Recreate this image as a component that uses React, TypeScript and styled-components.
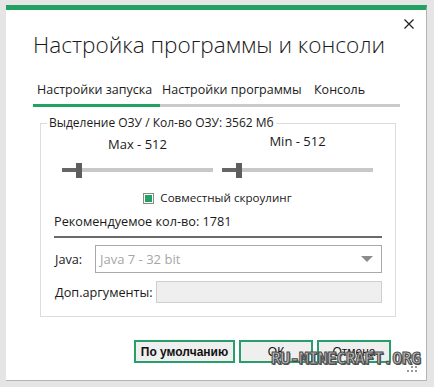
import React from "react";
import styled, { createGlobalStyle } from "styled-components";

const GREEN = "#22a163";

const Global = createGlobalStyle`
  html, body { margin: 0; padding: 0; background: #e5e5e5; }
  body { font-family: "Open Sans", "Noto Sans", sans-serif; color: #1a1a1a; }
`;

const Frame = styled.div`
  width: 434px;
  height: 387px;
  padding: 5px 6px 6px 6px;
  box-sizing: border-box;
  position: relative;
`;

const Window = styled.div`
  position: relative;
  width: 421px;
  height: 376px;
  box-sizing: border-box;
  background: #fff;
  border-top: 5px solid ${GREEN};
  border-right: 1px solid #b5b5b5;
  border-bottom: 1px solid #b5b5b5;
  display: flex;
  flex-direction: column;
`;

const Close = styled.svg`
  position: absolute;
  right: 12px;
  top: 9px;
  display: block;
`;

const Title = styled.h1`
  margin: 20px 0 0 27px;
  font-size: 22.6px;
  font-weight: 300;
  line-height: 30px;
  color: #1a1a1a;
  white-space: nowrap;
`;

const Tabs = styled.div`
  margin: 20px 0 0 27px;
  width: 367px;
  display: flex;
  border-bottom: 3px solid #cacaca;
`;

const Tab = styled.div<{ $active?: boolean; $w: number; $pl: number }>`
  width: ${(p) => p.$w}px;
  box-sizing: border-box;
  padding: 0 0 5px ${(p) => p.$pl}px;
  font-size: 12.5px;
  line-height: 19px;
  white-space: nowrap;
  position: relative;
  &::after {
    content: "";
    display: ${(p) => (p.$active ? "block" : "none")};
    position: absolute;
    left: 0;
    right: 0;
    bottom: -3px;
    height: 3px;
    background: ${GREEN};
  }
`;

const Group = styled.fieldset`
  margin: 8px 0 0 34px;
  width: 353px;
  height: 202px;
  box-sizing: border-box;
  border: 1px solid #dcdcdc;
  padding: 0 13px 0 12px;
  display: flex;
  flex-direction: column;
`;

const Legend = styled.legend`
  font-size: 12px;
  padding: 0 2px;
  margin-left: -6px;
  line-height: 16px;
  white-space: nowrap;
`;

const Sliders = styled.div`
  display: flex;
  gap: 9px;
  margin-top: 1px;
  margin-left: 9px;
`;

const SliderCol = styled.div`
  width: 151px;
  display: flex;
  flex-direction: column;
  align-items: center;
`;

const SliderLabel = styled.span<{ $top: number }>`
  font-size: 13px;
  line-height: 18px;
  height: 18px;
  margin-top: ${(p) => p.$top}px;
  margin-bottom: ${(p) => 12 - p.$top}px;
`;

const Track = styled.div`
  width: 151px;
  height: 16px;
  display: flex;
  align-items: center;
`;

const TrackFill = styled.div`
  width: 14px;
  height: 4px;
  background: #666;
`;

const Thumb = styled.div`
  width: 6px;
  height: 15px;
  background: #5e5e5e;
`;

const TrackRest = styled.div`
  flex: 1;
  height: 4px;
  background: #c8c8c8;
`;

const CheckRow = styled.div`
  display: flex;
  align-items: center;
  justify-content: center;
  gap: 6px;
  margin-top: 12px;
  font-size: 11.6px;
  line-height: 16px;
`;

const Box = styled.div`
  width: 11px;
  height: 11px;
  box-sizing: border-box;
  border: 1px solid #8a8a8a;
  padding: 1px;
  background: #fff;
  & > div {
    width: 100%;
    height: 100%;
    background: ${GREEN};
  }
`;

const Recommended = styled.div`
  margin-top: 6px;
  margin-left: 1px;
  font-size: 12.7px;
  line-height: 18px;
  padding-bottom: 6px;
  border-bottom: 2px solid #6a6a6a;
`;

const FieldRow = styled.div<{ $top: number }>`
  display: flex;
  align-items: center;
  margin-top: ${(p) => p.$top}px;
  margin-left: 2px;
  font-size: 12.7px;
`;

const Label = styled.div<{ $w: number }>`
  width: ${(p) => p.$w}px;
  flex-shrink: 0;
  white-space: nowrap;
`;

const Combo = styled.div`
  width: 287px;
  height: 28px;
  box-sizing: border-box;
  border: 1px solid #a9a9a9;
  display: flex;
  align-items: center;
  justify-content: space-between;
  padding: 0 8px 0 4px;
  color: #a6a6a6;
  font-size: 13px;
`;

const Arrow = styled.div`
  width: 0;
  height: 0;
  border-left: 6px solid transparent;
  border-right: 6px solid transparent;
  border-top: 6px solid #8c8c8c;
`;

const TextInput = styled.div`
  width: 226px;
  height: 22px;
  box-sizing: border-box;
  border: 1px solid #cfcfcf;
  background: #efefef;
`;

const Buttons = styled.div`
  display: flex;
  gap: 4px;
  margin: 23px 0 0 128px;
`;

const Button = styled.div<{ $w: number; $bold?: boolean }>`
  width: ${(p) => p.$w}px;
  height: 23px;
  box-sizing: border-box;
  border: 2px solid #2a9d6c;
  background: #efefef;
  display: flex;
  align-items: center;
  justify-content: center;
  font-family: "Liberation Sans", Arial, sans-serif;
  font-size: 12px;
  font-weight: ${(p) => (p.$bold ? 700 : 400)};
  color: #111;
`;

const Watermark = styled.div`
  position: absolute;
  left: 271px;
  top: 349px;
  font-family: "DejaVu Sans Mono", monospace;
  font-weight: 700;
  font-size: 16.5px;
  letter-spacing: -0.6px;
  color: #bdbdbd;
  -webkit-text-stroke: 1px #4a4a4a;
  text-shadow: 1px 1px 0 #555;
  white-space: nowrap;
`;

const Grip = styled.svg`
  position: absolute;
  right: 9px;
  bottom: 8px;
`;

export default function App() {
  return (
    <>
      <Global />
      <Frame>
        <Window>
          <Close width="10" height="10" viewBox="0 0 10 10">
            <path d="M0.5 0.5 L9.5 9.5 M9.5 0.5 L0.5 9.5" stroke="#222" strokeWidth="1.3" />
          </Close>
          <Title>Настройка программы и консоли</Title>
          <Tabs>
            <Tab $active $w={127} $pl={4}>Настройки запуска</Tab>
            <Tab $w={152} $pl={2}>Настройки программы</Tab>
            <Tab $w={88} $pl={2}>Консоль</Tab>
          </Tabs>
          <Group>
            <Legend>Выделение ОЗУ / Кол-во ОЗУ: 3562 Мб</Legend>
            <Sliders>
              <SliderCol>
                <SliderLabel $top={3}>Max - 512</SliderLabel>
                <Track>
                  <TrackFill />
                  <Thumb />
                  <TrackRest />
                </Track>
              </SliderCol>
              <SliderCol>
                <SliderLabel $top={0}>Min - 512</SliderLabel>
                <Track>
                  <TrackFill />
                  <Thumb />
                  <TrackRest />
                </Track>
              </SliderCol>
            </Sliders>
            <CheckRow>
              <Box>
                <div />
              </Box>
              Совместный скроулинг
            </CheckRow>
            <Recommended>Рекомендуемое кол-во: 1781</Recommended>
            <FieldRow $top={7}>
              <Label $w={40}>Java:</Label>
              <Combo>
                Java 7 - 32 bit
                <Arrow />
              </Combo>
            </FieldRow>
            <FieldRow $top={8}>
              <Label $w={101}>Доп.аргументы:</Label>
              <TextInput />
            </FieldRow>
          </Group>
          <Buttons>
            <Button $w={101} $bold>По умолчанию</Button>
            <Button $w={74}>ОК</Button>
            <Button $w={74}>Отмена</Button>
          </Buttons>
          <Grip width="10" height="10" viewBox="0 0 10 10">
            {[
              [8, 0], [8, 4], [4, 4], [8, 8], [4, 8], [0, 8],
            ].map(([x, y], i) => (
              <rect key={i} x={x} y={y} width="2" height="2" fill="#999" />
            ))}
          </Grip>
        </Window>
        <Watermark>RU-MINECRAFT.ORG</Watermark>
      </Frame>
    </>
  );
}
